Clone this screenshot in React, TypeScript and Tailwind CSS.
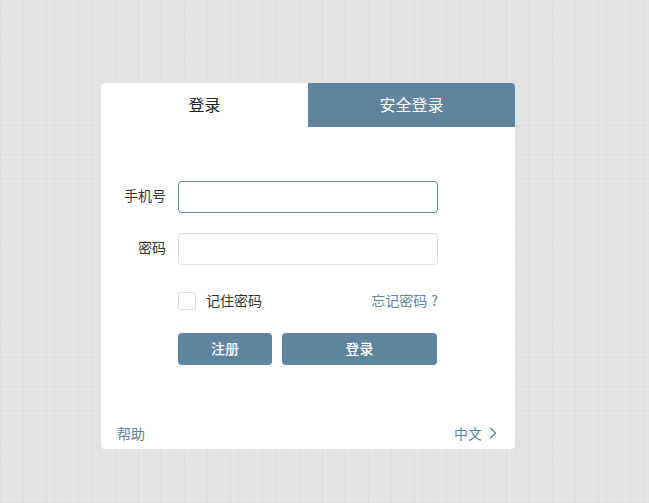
import { ChevronRight } from "lucide-react";

const font = "font-['Microsoft_YaHei','Noto_Sans_CJK_SC',sans-serif]";

function Field({ label, focused }: { label: string; focused?: boolean }) {
  return (
    <div className="flex items-center">
      <label className="w-[65px] pb-[4px] text-right text-[14px] leading-none text-[#333]">{label}</label>
      <input
        type="text"
        className={`ml-3 h-8 w-[260px] rounded-[4px] border bg-white outline-none ${focused ? "border-[#6f8491]" : "border-[#dcdfe0]"}`}
      />
    </div>
  );
}

export default function App() {
  return (
    <div
      className={`${font} flex h-[503px] w-[649px] flex-col items-center overflow-hidden bg-[#e1e3e5] pt-[83px] [background-image:repeating-linear-gradient(90deg,rgba(150,155,160,0.07)_0_1px,transparent_1px_3px,rgba(255,255,255,0.10)_3px_4px,transparent_4px_9px,rgba(150,155,160,0.05)_9px_10px,transparent_10px_23px),repeating-linear-gradient(0deg,rgba(150,155,160,0.06)_0_1px,transparent_1px_2px,rgba(255,255,255,0.10)_2px_3px,transparent_3px_11px,rgba(150,155,160,0.05)_11px_12px,transparent_12px_29px)]`}
    >
      <div className="ml-[-33px] flex h-[366px] w-[414px] flex-col overflow-hidden rounded-[4px] bg-white">
        <div className="flex h-11 shrink-0">
          <div className="flex w-[207px] items-center justify-center pb-[2px] text-[16px] text-[#222]">登录</div>
          <div className="flex flex-1 items-center justify-center bg-[#5f84a0] pb-[2px] text-[16px] text-white">安全登录</div>
        </div>

        <div className="flex flex-col gap-5 pt-[54px]">
          <Field label="手机号" focused />
          <Field label="密码" />
        </div>

        <div className="mt-[27px] flex w-[337px] items-center justify-between pl-[77px]">
          <div className="flex items-center">
            <span className="h-[18px] w-[18px] rounded-[2px] border border-[#dcdfe0]" />
            <span className="ml-[10px] pb-[2px] text-[14px] leading-none text-[#333]">记住密码</span>
          </div>
          <a className="pb-[2px] text-[14px] leading-none text-[#5f84a0]">
            忘记密码<span className="ml-[4px]">?</span>
          </a>
        </div>

        <div className="mt-[23px] flex gap-[10px] pl-[77px]">
          <button className="h-8 w-[94px] rounded-[4px] bg-[#5f84a0] pb-[2px] text-[14px] font-medium text-white">注册</button>
          <button className="h-8 w-[155px] rounded-[4px] bg-[#5f84a0] pb-[2px] text-[14px] font-medium text-white">登录</button>
        </div>

        <div className="mt-auto flex items-center justify-between pb-[6px] pl-4 pr-3 text-[14px] leading-[20px] text-[#5f7f94]">
          <a>帮助</a>
          <a className="flex items-center gap-[1px]">
            中文
            <ChevronRight size={20} strokeWidth={1.4} />
          </a>
        </div>
      </div>
    </div>
  );
}
